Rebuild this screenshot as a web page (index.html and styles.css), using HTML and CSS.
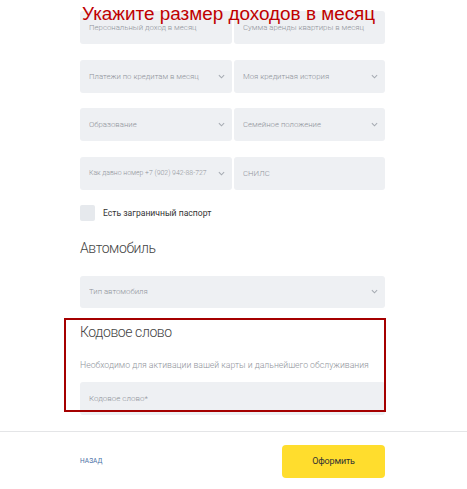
FILE: index.html
```html
<!DOCTYPE html>
<html lang="ru">
<head>
<meta charset="utf-8">
<title>Анкета</title>
<link rel="stylesheet" href="styles.css">
</head>
<body>
<div class="page">
  <main class="form">
    <div class="grid">
      <div class="field"><span>Персональный доход в месяц</span></div>
      <div class="field"><span>Сумма аренды квартиры в месяц</span></div>
      <div class="field select"><span>Платежи по кредитам в месяц</span><svg class="chev" viewBox="0 0 8 5"><path d="M1 1l3 3 3-3"/></svg></div>
      <div class="field select"><span>Моя кредитная история</span><svg class="chev" viewBox="0 0 8 5"><path d="M1 1l3 3 3-3"/></svg></div>
      <div class="field select"><span>Образование</span><svg class="chev" viewBox="0 0 8 5"><path d="M1 1l3 3 3-3"/></svg></div>
      <div class="field select"><span>Семейное положение</span><svg class="chev" viewBox="0 0 8 5"><path d="M1 1l3 3 3-3"/></svg></div>
      <div class="field select small"><span>Как давно номер +7 (902) 942-88-727</span><svg class="chev" viewBox="0 0 8 5"><path d="M1 1l3 3 3-3"/></svg></div>
      <div class="field"><span>СНИЛС</span></div>
    </div>
    <label class="check"><span class="box"></span><span>Есть заграничный паспорт</span></label>
    <h2 class="heading car">Автомобиль</h2>
    <div class="field select wide"><span>Тип автомобиля</span><svg class="chev" viewBox="0 0 8 5"><path d="M1 1l3 3 3-3"/></svg></div>
    <section class="code">
      <h2 class="heading">Кодовое слово</h2>
      <p class="note">Необходимо для активации вашей карты и дальнейшего обслуживания</p>
      <div class="field wide tall"><span>Кодовое слово*</span></div>
    </section>
  </main>
  <footer class="footer">
    <div class="footer-inner">
      <a class="back">НАЗАД</a>
      <button class="submit">Оформить</button>
    </div>
  </footer>
  <div class="title">Укажите размер доходов в месяц</div>
  <div class="highlight"></div>
</div>
</body>
</html>
```
FILE: styles.css
```css
html, body {
  margin: 0;
  padding: 0;
  background: #fff;
}
body {
  font-family: Roboto, "Noto Sans", sans-serif;
  overflow: hidden;
}
.page {
  position: relative;
  width: 467px;
  height: 489px;
}
.form {
  width: 305px;
  margin-left: 80px;
  padding-top: 11px;
}
.grid {
  display: grid;
  grid-template-columns: 152px 151px;
  column-gap: 2px;
  row-gap: 15.5px;
}
.field {
  height: 33px;
  background: #eef0f3;
  border-radius: 3px;
  display: flex;
  align-items: center;
  padding: 0 7px 0 9px;
  box-sizing: border-box;
  font-size: 7.8px;
  color: #8e939a;
  font-weight: 300;
  white-space: nowrap;
}
.field span {
  flex: 1;
  overflow: hidden;
}
.field.small {
  font-size: 6.9px;
}
.chev {
  width: 7px;
  height: 5px;
  flex: none;
  margin-left: 3px;
}
.chev path {
  fill: none;
  stroke: #a6abb2;
  stroke-width: 1.2;
}
.check {
  display: flex;
  align-items: center;
  margin-top: 15px;
  height: 16px;
  font-size: 8.6px;
  color: #333;
  font-weight: 400;
}
.box {
  width: 15px;
  height: 16px;
  background: #e6e9ed;
  border-radius: 2px;
  margin-right: 8px;
}
.heading {
  margin: 0;
  font-size: 14px;
  line-height: 20px;
  font-weight: 300;
  letter-spacing: -0.4px;
  color: #444;
}
.car {
  margin-top: 17px;
}
.wide {
  width: 305px;
  height: 32px;
  margin-top: 18px;
}
.code {
  margin-top: 14px;
}
.note {
  margin: 16px 0 0;
  font-size: 8.7px;
  line-height: 14px;
  color: #8f949b;
  font-weight: 300;
}
.code .tall {
  margin-top: 10px;
  height: 33px;
  font-size: 8px;
}
.footer {
  margin-top: 16px;
  border-top: 1px solid #e4e5e7;
}
.footer-inner {
  width: 305px;
  margin-left: 80px;
  padding-top: 13px;
  display: flex;
  align-items: center;
  justify-content: space-between;
}
.back {
  font-size: 6.5px;
  color: #4a6fa5;
  letter-spacing: 0.1px;
}
.submit {
  width: 103px;
  height: 33px;
  border: none;
  border-radius: 4px;
  background: #ffdd2d;
  font-family: Roboto, sans-serif;
  font-size: 9px;
  letter-spacing: -0.2px;
  color: #333;
  font-weight: 400;
  padding: 0;
}
.title {
  position: absolute;
  left: 82px;
  top: 2px;
  font-family: "Liberation Sans", Arial, sans-serif;
  font-size: 18.9px;
  line-height: 24px;
  color: #c00000;
  white-space: nowrap;
}
.highlight {
  position: absolute;
  left: 64px;
  top: 318px;
  width: 322px;
  height: 94px;
  border: 2px solid #a50000;
  box-sizing: border-box;
}
```
